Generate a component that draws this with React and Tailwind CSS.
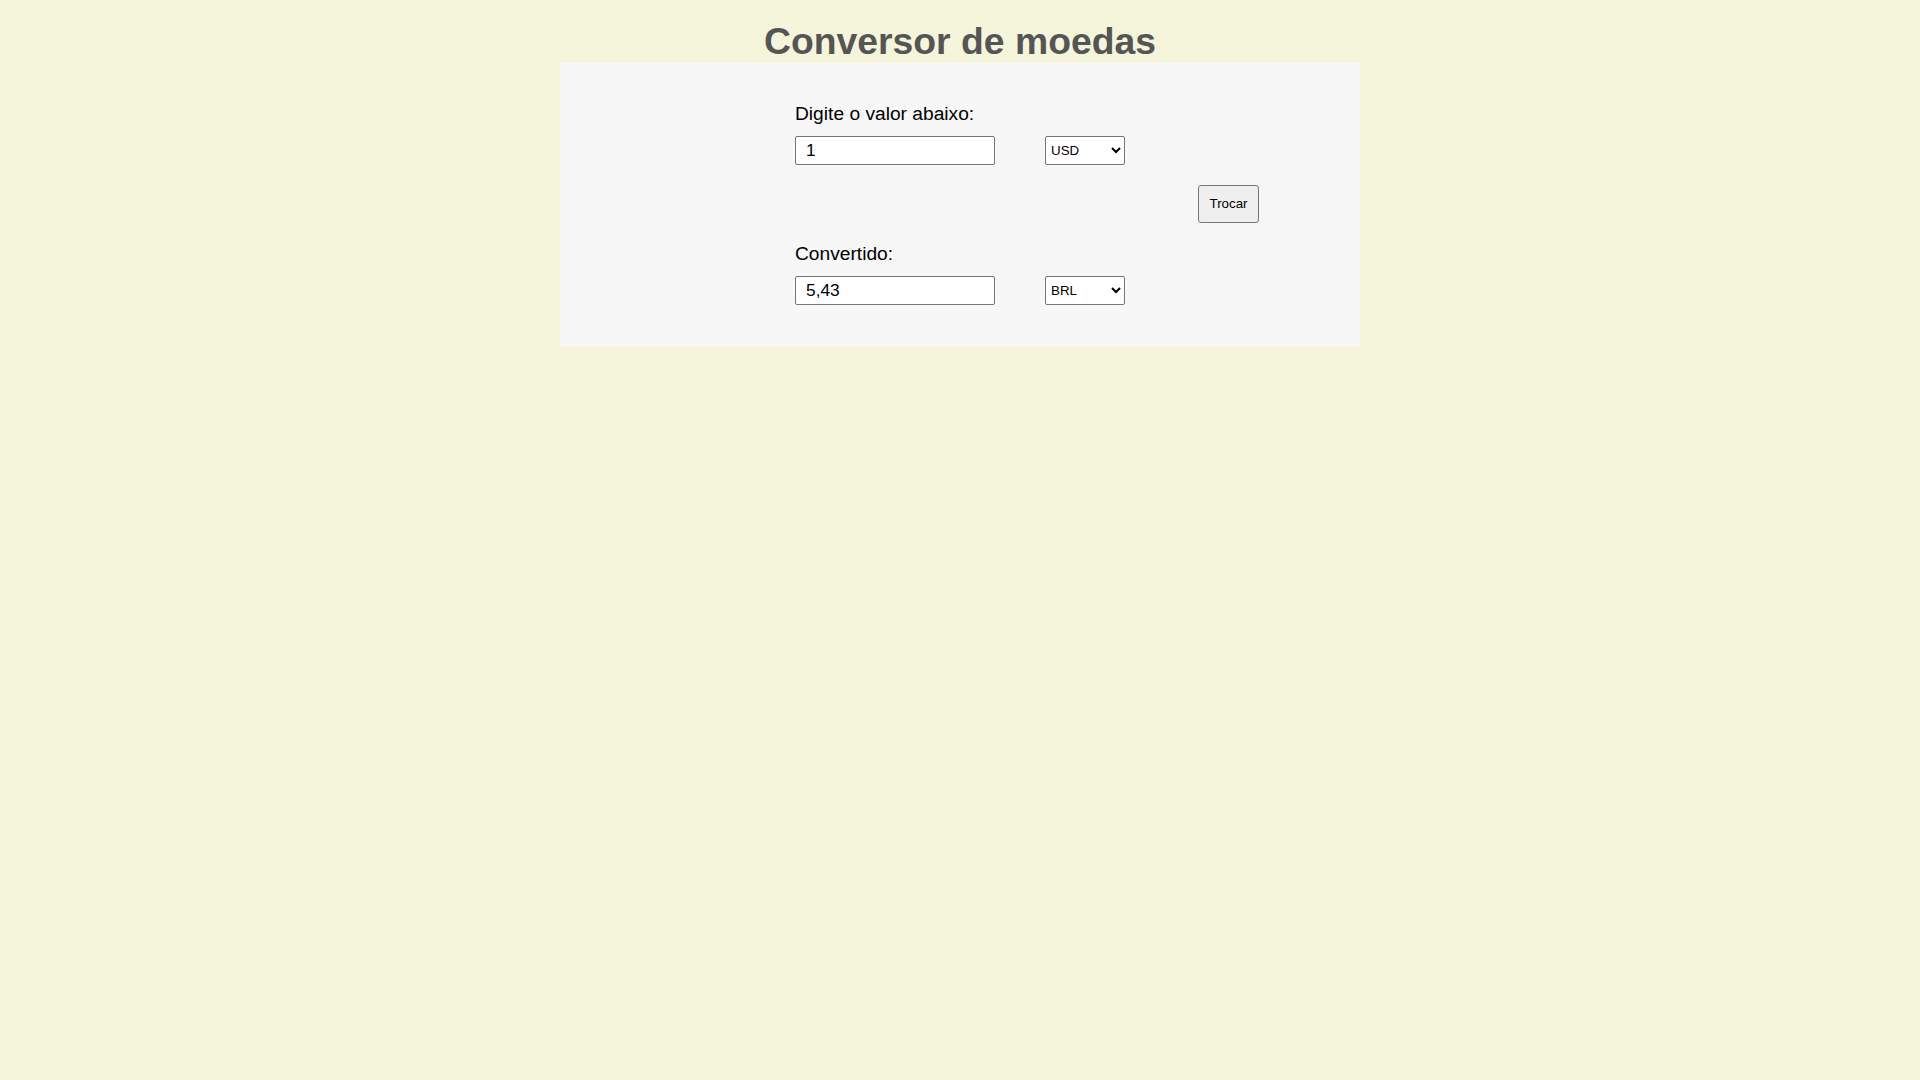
import React, { useState } from "react";

export default function App() {
  const [valor, setValor] = useState("1");
  const [de, setDe] = useState("USD");
  const [para, setPara] = useState("BRL");

  return (
    <div className="min-h-screen w-full bg-[#f5f5dc] font-['Liberation_Sans',Arial,sans-serif] text-black">
      <h1 className="pt-[20px] text-center text-[37.33px] leading-[43px] font-bold text-[#555555]">
        Conversor de moedas
      </h1>
      <div className="mx-auto w-[800px] bg-[#f7f7f7] pt-[40px] pb-[41px]">
        <div className="ml-[235px] flex flex-col items-start">
          <label className="text-[19.2px] leading-[22px]">Digite o valor abaixo:</label>
          <div className="mt-[11px] flex items-stretch gap-[50px]">
            <input
              type="text"
              value={valor}
              onChange={(e) => setValor(e.target.value)}
              className="h-[29px] w-[200px] rounded-[2px] border border-[#767676] bg-white px-[10px] text-[17.33px] text-black outline-none"
            />
            <select
              value={de}
              onChange={(e) => setDe(e.target.value)}
              className="h-[29px] w-[80px] rounded-[2px] border border-[#767676] bg-white pl-[1px] text-[13.33px] text-black"
            >
              <option>USD</option>
              <option>BRL</option>
              <option>EUR</option>
            </select>
          </div>
          <button className="mt-[20px] ml-[403px] h-[38px] w-[61px] rounded-[3px] border border-[#767676] bg-[#efefef] text-[13.33px] text-black">
            Trocar
          </button>
          <label className="mt-[20px] text-[19.2px] leading-[22px]">Convertido:</label>
          <div className="mt-[11px] flex items-stretch gap-[50px]">
            <input
              type="text"
              value="5,43"
              readOnly
              className="h-[29px] w-[200px] rounded-[2px] border border-[#767676] bg-white px-[10px] text-[17.33px] text-black outline-none"
            />
            <select
              value={para}
              onChange={(e) => setPara(e.target.value)}
              className="h-[29px] w-[80px] rounded-[2px] border border-[#767676] bg-white pl-[1px] text-[13.33px] text-black"
            >
              <option>USD</option>
              <option>BRL</option>
              <option>EUR</option>
            </select>
          </div>
        </div>
      </div>
    </div>
  );
}
